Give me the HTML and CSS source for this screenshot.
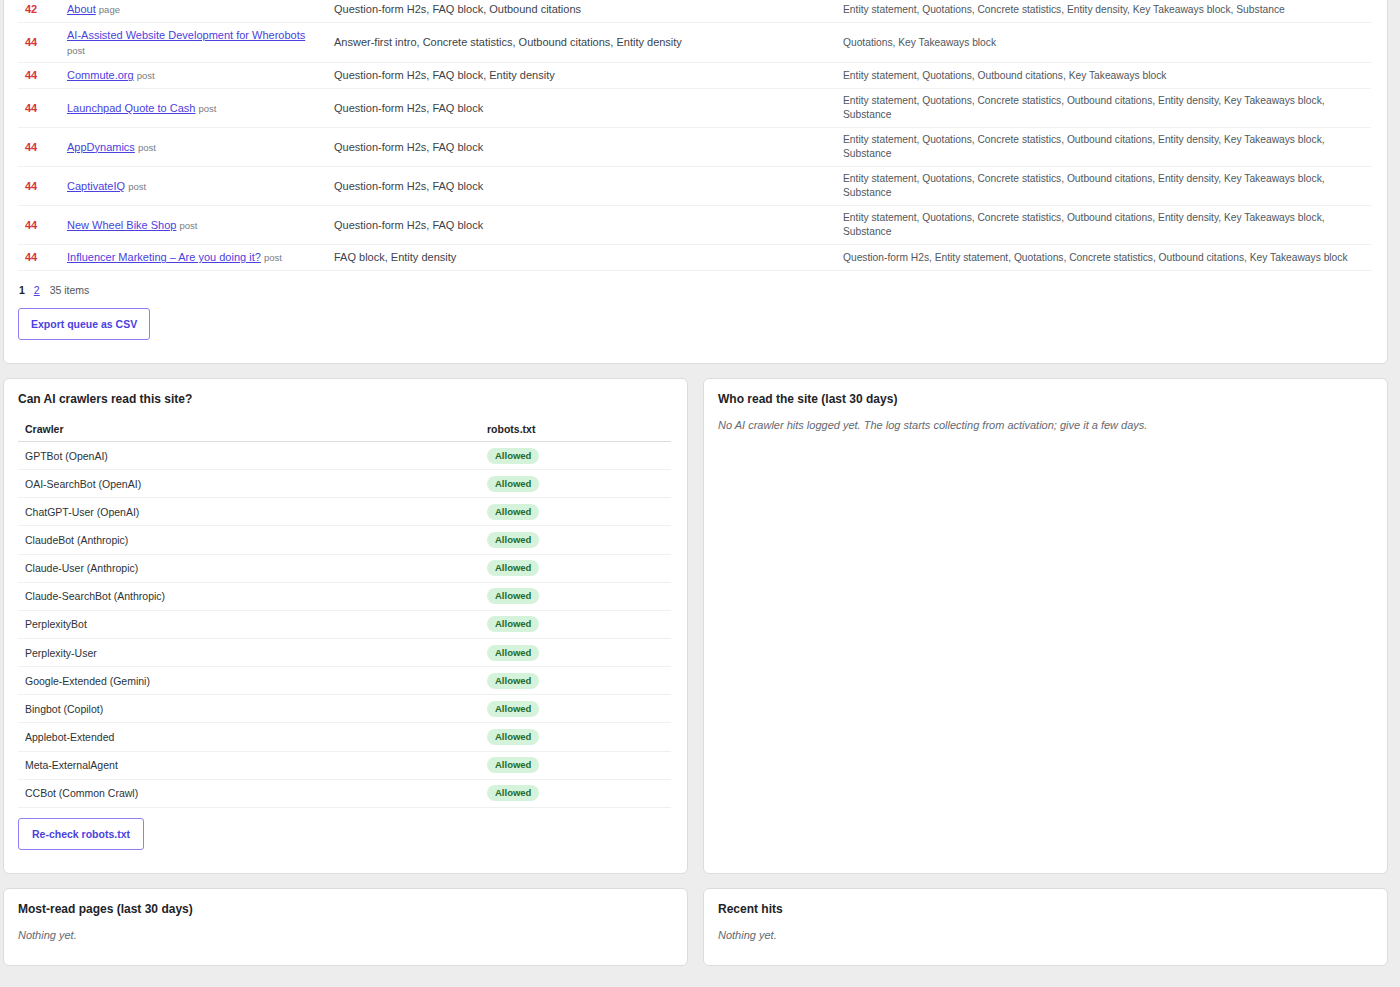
FILE: index.html
```html
<!DOCTYPE html>
<html lang="en">
<head>
    <meta charset="UTF-8">
    <title>AI Visibility</title>
    <link rel="stylesheet" href="styles.css">
</head>
<body>
<div class="wrap">
    <div class="card queue">
        <table class="queue-table">
            <colgroup>
                <col class="c-score">
                <col class="c-title">
                <col class="c-missing">
                <col class="c-other">
            </colgroup>
            <tbody>
                <tr>
                    <td class="score">42</td>
                    <td class="title"><a href="#">About</a> <span class="type">page</span></td>
                    <td class="missing">Question-form H2s, FAQ block, Outbound citations</td>
                    <td class="other">Entity statement, Quotations, Concrete statistics, Entity density, Key Takeaways block, Substance</td>
                </tr>
                <tr>
                    <td class="score">44</td>
                    <td class="title"><a href="#">AI-Assisted Website Development for Wherobots</a> <span class="type">post</span></td>
                    <td class="missing">Answer-first intro, Concrete statistics, Outbound citations, Entity density</td>
                    <td class="other">Quotations, Key Takeaways block</td>
                </tr>
                <tr>
                    <td class="score">44</td>
                    <td class="title"><a href="#">Commute.org</a> <span class="type">post</span></td>
                    <td class="missing">Question-form H2s, FAQ block, Entity density</td>
                    <td class="other">Entity statement, Quotations, Outbound citations, Key Takeaways block</td>
                </tr>
                <tr>
                    <td class="score">44</td>
                    <td class="title"><a href="#">Launchpad Quote to Cash</a> <span class="type">post</span></td>
                    <td class="missing">Question-form H2s, FAQ block</td>
                    <td class="other">Entity statement, Quotations, Concrete statistics, Outbound citations, Entity density, Key Takeaways block, Substance</td>
                </tr>
                <tr>
                    <td class="score">44</td>
                    <td class="title"><a href="#">AppDynamics</a> <span class="type">post</span></td>
                    <td class="missing">Question-form H2s, FAQ block</td>
                    <td class="other">Entity statement, Quotations, Concrete statistics, Outbound citations, Entity density, Key Takeaways block, Substance</td>
                </tr>
                <tr>
                    <td class="score">44</td>
                    <td class="title"><a href="#">CaptivateIQ</a> <span class="type">post</span></td>
                    <td class="missing">Question-form H2s, FAQ block</td>
                    <td class="other">Entity statement, Quotations, Concrete statistics, Outbound citations, Entity density, Key Takeaways block, Substance</td>
                </tr>
                <tr>
                    <td class="score">44</td>
                    <td class="title"><a href="#">New Wheel Bike Shop</a> <span class="type">post</span></td>
                    <td class="missing">Question-form H2s, FAQ block</td>
                    <td class="other">Entity statement, Quotations, Concrete statistics, Outbound citations, Entity density, Key Takeaways block, Substance</td>
                </tr>
                <tr>
                    <td class="score">44</td>
                    <td class="title"><a href="#">Influencer Marketing – Are you doing it?</a> <span class="type">post</span></td>
                    <td class="missing">FAQ block, Entity density</td>
                    <td class="other">Question-form H2s, Entity statement, Quotations, Concrete statistics, Outbound citations, Key Takeaways block</td>
                </tr>
            </tbody>
        </table>
        <div class="pager">
            <span class="current">1</span>
            <a href="#">2</a>
            <span class="count">35 items</span>
        </div>
        <button class="btn">Export queue as CSV</button>
    </div>

    <div class="grid">
        <div class="card">
            <h2>Can AI crawlers read this site?</h2>
            <table class="crawlers">
                <colgroup>
                    <col class="c-name">
                    <col>
                </colgroup>
                <thead>
                    <tr><th>Crawler</th><th>robots.txt</th></tr>
                </thead>
                <tbody>
                    <tr><td>GPTBot (OpenAI)</td><td><span class="badge">Allowed</span></td></tr>
                    <tr><td>OAI-SearchBot (OpenAI)</td><td><span class="badge">Allowed</span></td></tr>
                    <tr><td>ChatGPT-User (OpenAI)</td><td><span class="badge">Allowed</span></td></tr>
                    <tr><td>ClaudeBot (Anthropic)</td><td><span class="badge">Allowed</span></td></tr>
                    <tr><td>Claude-User (Anthropic)</td><td><span class="badge">Allowed</span></td></tr>
                    <tr><td>Claude-SearchBot (Anthropic)</td><td><span class="badge">Allowed</span></td></tr>
                    <tr><td>PerplexityBot</td><td><span class="badge">Allowed</span></td></tr>
                    <tr><td>Perplexity-User</td><td><span class="badge">Allowed</span></td></tr>
                    <tr><td>Google-Extended (Gemini)</td><td><span class="badge">Allowed</span></td></tr>
                    <tr><td>Bingbot (Copilot)</td><td><span class="badge">Allowed</span></td></tr>
                    <tr><td>Applebot-Extended</td><td><span class="badge">Allowed</span></td></tr>
                    <tr><td>Meta-ExternalAgent</td><td><span class="badge">Allowed</span></td></tr>
                    <tr><td>CCBot (Common Crawl)</td><td><span class="badge">Allowed</span></td></tr>
                </tbody>
            </table>
            <button class="btn">Re-check robots.txt</button>
        </div>
        <div class="card">
            <h2>Who read the site (last 30 days)</h2>
            <p class="empty">No AI crawler hits logged yet. The log starts collecting from activation; give it a few days.</p>
        </div>
        <div class="card">
            <h2>Most-read pages (last 30 days)</h2>
            <p class="empty">Nothing yet.</p>
        </div>
        <div class="card">
            <h2>Recent hits</h2>
            <p class="empty">Nothing yet.</p>
        </div>
    </div>
</div>
</body>
</html>
```

FILE: styles.css
```css
body {
    margin: 0;
    background-color: #ededed;
    font-family: "Liberation Sans", Arial, sans-serif;
    font-size: 10.5px;
    color: #3c434a;
}
a {
    color: #4b3fe0;
}
.wrap {
    padding: 0 12px 0 3px;
}
.card {
    background-color: #fff;
    border: 1px solid #dcdcde;
    border-radius: 6px;
    padding: 12px 16px 23px 14px;
}
.card h2 {
    margin: 0;
    font-size: 12px;
    line-height: 16px;
    color: #1d2327;
}
.queue {
    margin-top: -15px;
    padding-top: 11px;
    border-top-left-radius: 0;
    border-top-right-radius: 0;
}
.grid {
    display: grid;
    grid-template-columns: 1fr 1fr;
    gap: 14px 15px;
    margin-top: 14px;
}

/* queue table */
.queue-table {
    width: 100%;
    border-collapse: collapse;
    table-layout: fixed;
}
.c-score { width: 42px; }
.c-title { width: 267px; }
.c-missing { width: 509px; }
.queue-table td {
    padding: 5px 7px;
    border-bottom: 1px solid #f0f0f1;
    vertical-align: middle;
    line-height: 15px;
}
.queue-table td.title {
    font-size: 11px;
    line-height: 14.5px;
}
.score {
    color: #d63638;
    font-weight: bold;
    font-size: 11px;
}
.type {
    color: #787c82;
    font-size: 9.5px;
    line-height: 1;
}
.queue-table td.missing {
    font-size: 11px;
    color: #3c434a;
}
.queue-table td.other {
    font-size: 10.25px;
    line-height: 14px;
    color: #50575e;
}
.pager {
    display: flex;
    gap: 9px;
    margin: 12px 0 11px 1px;
    line-height: 14px;
}
.pager .current {
    font-weight: bold;
    color: #1d2327;
}
.pager .count {
    color: #50575e;
    margin-left: 1px;
}

/* buttons */
.btn {
    display: block;
    height: 32px;
    padding: 0 12px;
    background: #fff;
    border: 1px solid #8c80f3;
    border-radius: 3px;
    color: #4b3fe0;
    font-family: inherit;
    font-size: 10.5px;
    font-weight: bold;
}

/* crawler table */
.crawlers {
    width: 100%;
    border-collapse: collapse;
    margin-top: 11px;
}
.c-name { width: 462px; }
.crawlers th {
    text-align: left;
    font-weight: bold;
    color: #1d2327;
    padding: 4px 7px 5px;
    line-height: 14px;
    border-bottom: 1px solid #dcdcde;
}
.crawlers td {
    padding: 0 7px;
    height: 27.15px;
    border-bottom: 1px solid #f0f0f1;
    color: #2c3338;
}
.badge {
    display: inline-block;
    background-color: #d5f3da;
    color: #1e6a2d;
    font-weight: bold;
    font-size: 9.5px;
    line-height: 16px;
    padding: 0 8px;
    border-radius: 8px;
}
.crawlers + .btn {
    margin-top: 10px;
    padding: 0 13px;
}
.empty {
    margin: 11px 0 0;
    font-size: 11px;
    font-style: italic;
    color: #646970;
    line-height: 14px;
}
```
